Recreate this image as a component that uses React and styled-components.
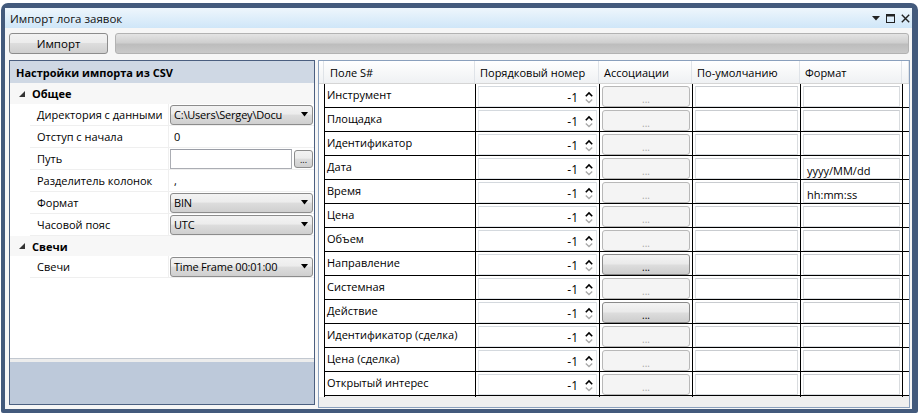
import React from "react";
import styled, { createGlobalStyle, css } from "styled-components";

const Global = createGlobalStyle`
  html, body { margin: 0; padding: 0; background: #ffffff; }
  body { font-family: "Open Sans", "Noto Sans", sans-serif; font-size: 11px; color: #000; }
  * { box-sizing: border-box; }
`;

const Page = styled.div`
  width: 922px;
  height: 418px;
  padding: 3px 0 0 1px;
`;

const Window = styled.div`
  width: 917px;
  height: 410px;
  background: #435a7c;
  border-radius: 7px 7px 2px 2px;
  padding: 5px 6px 4px 4px;
  display: flex;
  flex-direction: column;
`;

const TitleBar = styled.div`
  height: 20px;
  flex: none;
  background: linear-gradient(#eef6fc, #cfe6f8);
  display: flex;
  align-items: center;
  padding: 0 0 0 5px;
  font-size: 11.5px;
  color: #111;
`;

const TitleText = styled.span`
  flex: 1;
`;

const TitleIcons = styled.div`
  display: flex;
  align-items: center;
  gap: 6px;
  padding-right: 2px;
`;

const Body = styled.div`
  flex: 1;
  background: #f6f6f6;
  display: flex;
  flex-direction: column;
  min-height: 0;
`;

const Toolbar = styled.div`
  display: flex;
  gap: 7px;
  padding: 5px 3px 0 4px;
  height: 26px;
  flex: none;
`;

const winBtn = css`
  border: 1px solid #8c8c8c;
  border-radius: 3px;
  background: linear-gradient(#f3f3f3 0%, #ececec 45%, #dddddd 50%, #cfcfcf 100%);
`;

const ImportButton = styled.div`
  ${winBtn};
  width: 99px;
  height: 21px;
  display: flex;
  align-items: center;
  justify-content: center;
  font-size: 11.5px;
`;

const Progress = styled.div`
  flex: 1;
  height: 21px;
  border: 1px solid #b2b2b2;
  border-radius: 3px;
  background: linear-gradient(#e4e4e4, #cfcfcf 45%, #bdbdbd 55%, #c9c9c9);
`;

const Main = styled.div`
  flex: 1;
  display: flex;
  gap: 3px;
  padding: 6px 2px 1px 4px;
  min-height: 0;
`;

const LeftPanel = styled.div`
  width: 306px;
  height: 345px;
  border: 1px solid #4b5f80;
  background: #fff;
  display: flex;
  flex-direction: column;
`;

const PanelHeader = styled.div`
  height: 22px;
  flex: none;
  background: #cfd8e4;
  font-weight: 700;
  display: flex;
  align-items: center;
  padding-left: 6px;
  font-size: 11px;
`;

const PropList = styled.div`
  flex: 1;
  display: flex;
  flex-direction: column;
`;

const CategoryRow = styled.div`
  height: ${(p) => p.$h}px;
  flex: none;
  display: flex;
  align-items: center;
  font-weight: 700;
  background: #f7f7f7;
`;

const Expander = styled.span`
  width: 22px;
  display: flex;
  justify-content: center;
  padding-left: 2px;
`;

const PropRow = styled.div`
  height: ${(p) => p.$h}px;
  flex: none;
  display: grid;
  grid-template-columns: 20px 139px 1fr;
  align-items: stretch;
`;

const Gutter = styled.div`
  background: #ffffff;
`;

const PropName = styled.div`
  display: flex;
  align-items: center;
  padding-left: 7px;
  border-bottom: 1px solid #efefef;
  border-right: 1px solid #efefef;
  white-space: nowrap;
  overflow: hidden;
`;

const PropValue = styled.div`
  display: flex;
  align-items: center;
  padding: 0 1px 0 1px;
  border-bottom: 1px solid #efefef;
  gap: 2px;
  min-width: 0;
`;

const PlainValue = styled.span`
  padding-left: 4px;
`;

const Combo = styled.div`
  ${winBtn};
  flex: 1;
  height: 20px;
  display: flex;
  align-items: center;
  padding: 0 4px 0 3px;
  min-width: 0;
`;

const ComboText = styled.span`
  flex: 1;
  white-space: nowrap;
  letter-spacing: -0.2px;
`;

const TextBox = styled.div`
  flex: 1;
  height: 20px;
  background: #fff;
  border: 1px solid #abadb3;
  border-top-color: #9a9da6;
`;

const SmallButton = styled.div`
  ${winBtn};
  width: 19px;
  height: 18px;
  display: flex;
  align-items: flex-end;
  justify-content: center;
  font-size: 9px;
  line-height: 12px;
  padding-bottom: 1px;
`;

const PanelFill = styled.div`
  flex: 1;
`;

const Description = styled.div`
  height: 46px;
  flex: none;
  border-top: 1px solid #c2c8d0;
  background: #bdc9da;
  box-shadow: inset 0 3px 0 #ececec;
`;

const Grid = styled.div`
  flex: 1;
  height: 348px;
  border: 1px solid #8aa0bd;
  background: #efefef;
  display: flex;
  flex-direction: column;
`;

const cols = "5px 151px 124px 93px 108px 102px 1fr";

const HeaderRow = styled.div`
  display: grid;
  grid-template-columns: ${cols};
  height: 23px;
  flex: none;
  background: linear-gradient(#ffffff, #f7f8f9 50%, #eff1f3);
  border-bottom: 1px solid #d5d5d5;
`;

const HeaderCell = styled.div`
  display: flex;
  align-items: center;
  padding-left: ${(p) => p.$pl ?? 5}px;
  border-right: 1px solid #dfe3e8;
  white-space: nowrap;
`;

const Row = styled.div`
  display: grid;
  grid-template-columns: ${cols};
  height: 24px;
  flex: none;
  background: #fff;
  border-bottom: 1px solid #000;
`;

const RowHead = styled.div`
  background: #fff;
`;

const Cell = styled.div`
  border-left: 1px solid #000;
  display: flex;
  align-items: center;
  padding: 2px 2px 2px 2px;
  min-width: 0;
`;

const NameCell = styled(Cell)`
  padding: 0 0 4px 2px;
  white-space: nowrap;
`;

const NumBox = styled.div`
  flex: 1;
  height: 100%;
  border: 1px solid #e2e6ea;
  border-top-color: #d4d9de;
  display: flex;
  align-items: center;
  justify-content: flex-end;
  padding: 2px 3px 0 0;
  gap: 7px;
  font-size: 12px;
`;

const AssocButton = styled.div`
  flex: 1;
  height: 100%;
  border-radius: 3px;
  display: flex;
  align-items: flex-end;
  justify-content: center;
  font-size: 10px;
  line-height: 10px;
  padding-bottom: 2px;
  ${(p) =>
    p.$enabled
      ? css`
          border: 1px solid #8a8a8a;
          background: linear-gradient(#f4f4f4, #eaeaea 45%, #dcdcdc 55%, #cdcdcd);
          color: #000;
        `
      : css`
          border: 1px solid #b8b8b8;
          background: #f4f4f4;
          color: #a8a8a8;
        `}
`;

const InputBox = styled.div`
  flex: 1;
  height: 100%;
  border: 1px solid #d9dcdf;
  border-top-color: #c9ccd0;
  display: flex;
  align-items: center;
  padding: 3px 0 0 3px;
  font-size: 11px;
  white-space: nowrap;
`;

const GridFill = styled.div`
  flex: 1;
`;

const Triangle = ({ color = "#000" }) => (
  <svg width="7" height="5" viewBox="0 0 7 5">
    <path d="M0 0 H7 L3.5 4.5 Z" fill={color} />
  </svg>
);

const Spinner = () => (
  <svg width="8" height="13" viewBox="0 0 8 13">
    <path d="M0.8 5.2 L4 2 L7.2 5.2" stroke="#000" strokeWidth="1.6" fill="none" />
    <path d="M0.8 8.5 L4 11.5 L7.2 8.5" stroke="#a9a9a9" strokeWidth="1.3" fill="none" />
  </svg>
);

const Expand = () => (
  <svg width="6" height="6" viewBox="0 0 6 6">
    <path d="M6 0 V6 H0 Z" fill="#333" />
  </svg>
);

const settings = [
  { type: "cat", name: "Общее", h: 21 },
  { name: "Директория с данными", combo: "C:\\Users\\Sergey\\Docu", h: 22 },
  { name: "Отступ с начала", text: "0", h: 22 },
  { name: "Путь", path: true, h: 22 },
  { name: "Разделитель колонок", text: ",", h: 22 },
  { name: "Формат", combo: "BIN", h: 22 },
  { name: "Часовой пояс", combo: "UTC", h: 22 },
  { type: "cat", name: "Свечи", h: 20 },
  { name: "Свечи", combo: "Time Frame 00:01:00", h: 22 },
];

const fields = [
  { n: "Инструмент" },
  { n: "Площадка" },
  { n: "Идентификатор" },
  { n: "Дата", f: "yyyy/MM/dd" },
  { n: "Время", f: "hh:mm:ss" },
  { n: "Цена" },
  { n: "Объем" },
  { n: "Направление", e: true },
  { n: "Системная" },
  { n: "Действие", e: true },
  { n: "Идентификатор (сделка)" },
  { n: "Цена (сделка)" },
  { n: "Открытый интерес" },
];

export default function App() {
  return (
    <Page>
      <Global />
      <Window>
        <TitleBar>
          <TitleText>Импорт лога заявок</TitleText>
          <TitleIcons>
            <svg width="8" height="5" viewBox="0 0 8 5">
              <path d="M0 0 H8 L4 4.5 Z" fill="#222" />
            </svg>
            <svg width="9" height="9" viewBox="0 0 9 9">
              <rect x="0.5" y="0.5" width="8" height="8" fill="none" stroke="#222" />
              <rect x="0" y="0" width="9" height="2.5" fill="#222" />
            </svg>
            <svg width="9" height="9" viewBox="0 0 9 9">
              <path d="M0.8 0.8 L8.2 8.2 M8.2 0.8 L0.8 8.2" stroke="#222" strokeWidth="1.4" />
            </svg>
          </TitleIcons>
        </TitleBar>
        <Body>
          <Toolbar>
            <ImportButton>Импорт</ImportButton>
            <Progress />
          </Toolbar>
          <Main>
            <LeftPanel>
              <PanelHeader>Настройки импорта из CSV</PanelHeader>
              <PropList>
                {settings.map((s, i) =>
                  s.type === "cat" ? (
                    <CategoryRow key={i} $h={s.h}>
                      <Expander>
                        <Expand />
                      </Expander>
                      {s.name}
                    </CategoryRow>
                  ) : (
                    <PropRow key={i} $h={s.h}>
                      <Gutter />
                      <PropName>{s.name}</PropName>
                      <PropValue>
                        {s.combo && (
                          <Combo>
                            <ComboText>{s.combo}</ComboText>
                            <Triangle />
                          </Combo>
                        )}
                        {s.text !== undefined && <PlainValue>{s.text}</PlainValue>}
                        {s.path && (
                          <>
                            <TextBox />
                            <SmallButton>...</SmallButton>
                          </>
                        )}
                      </PropValue>
                    </PropRow>
                  )
                )}
                <PanelFill />
              </PropList>
              <Description />
            </LeftPanel>
            <Grid>
              <HeaderRow>
                <HeaderCell $pl={0} />
                <HeaderCell $pl={6}>Поле S#</HeaderCell>
                <HeaderCell>Порядковый номер</HeaderCell>
                <HeaderCell>Ассоциации</HeaderCell>
                <HeaderCell>По-умолчанию</HeaderCell>
                <HeaderCell>Формат</HeaderCell>
                <HeaderCell $pl={0} />
              </HeaderRow>
              {fields.map((f, i) => (
                <Row key={i}>
                  <RowHead />
                  <NameCell>{f.n}</NameCell>
                  <Cell>
                    <NumBox>
                      <span>-1</span>
                      <Spinner />
                    </NumBox>
                  </Cell>
                  <Cell>
                    <AssocButton $enabled={f.e}>...</AssocButton>
                  </Cell>
                  <Cell>
                    <InputBox />
                  </Cell>
                  <Cell>
                    <InputBox>{f.f}</InputBox>
                  </Cell>
                  <Cell />
                </Row>
              ))}
              <GridFill />
            </Grid>
          </Main>
        </Body>
      </Window>
    </Page>
  );
}
